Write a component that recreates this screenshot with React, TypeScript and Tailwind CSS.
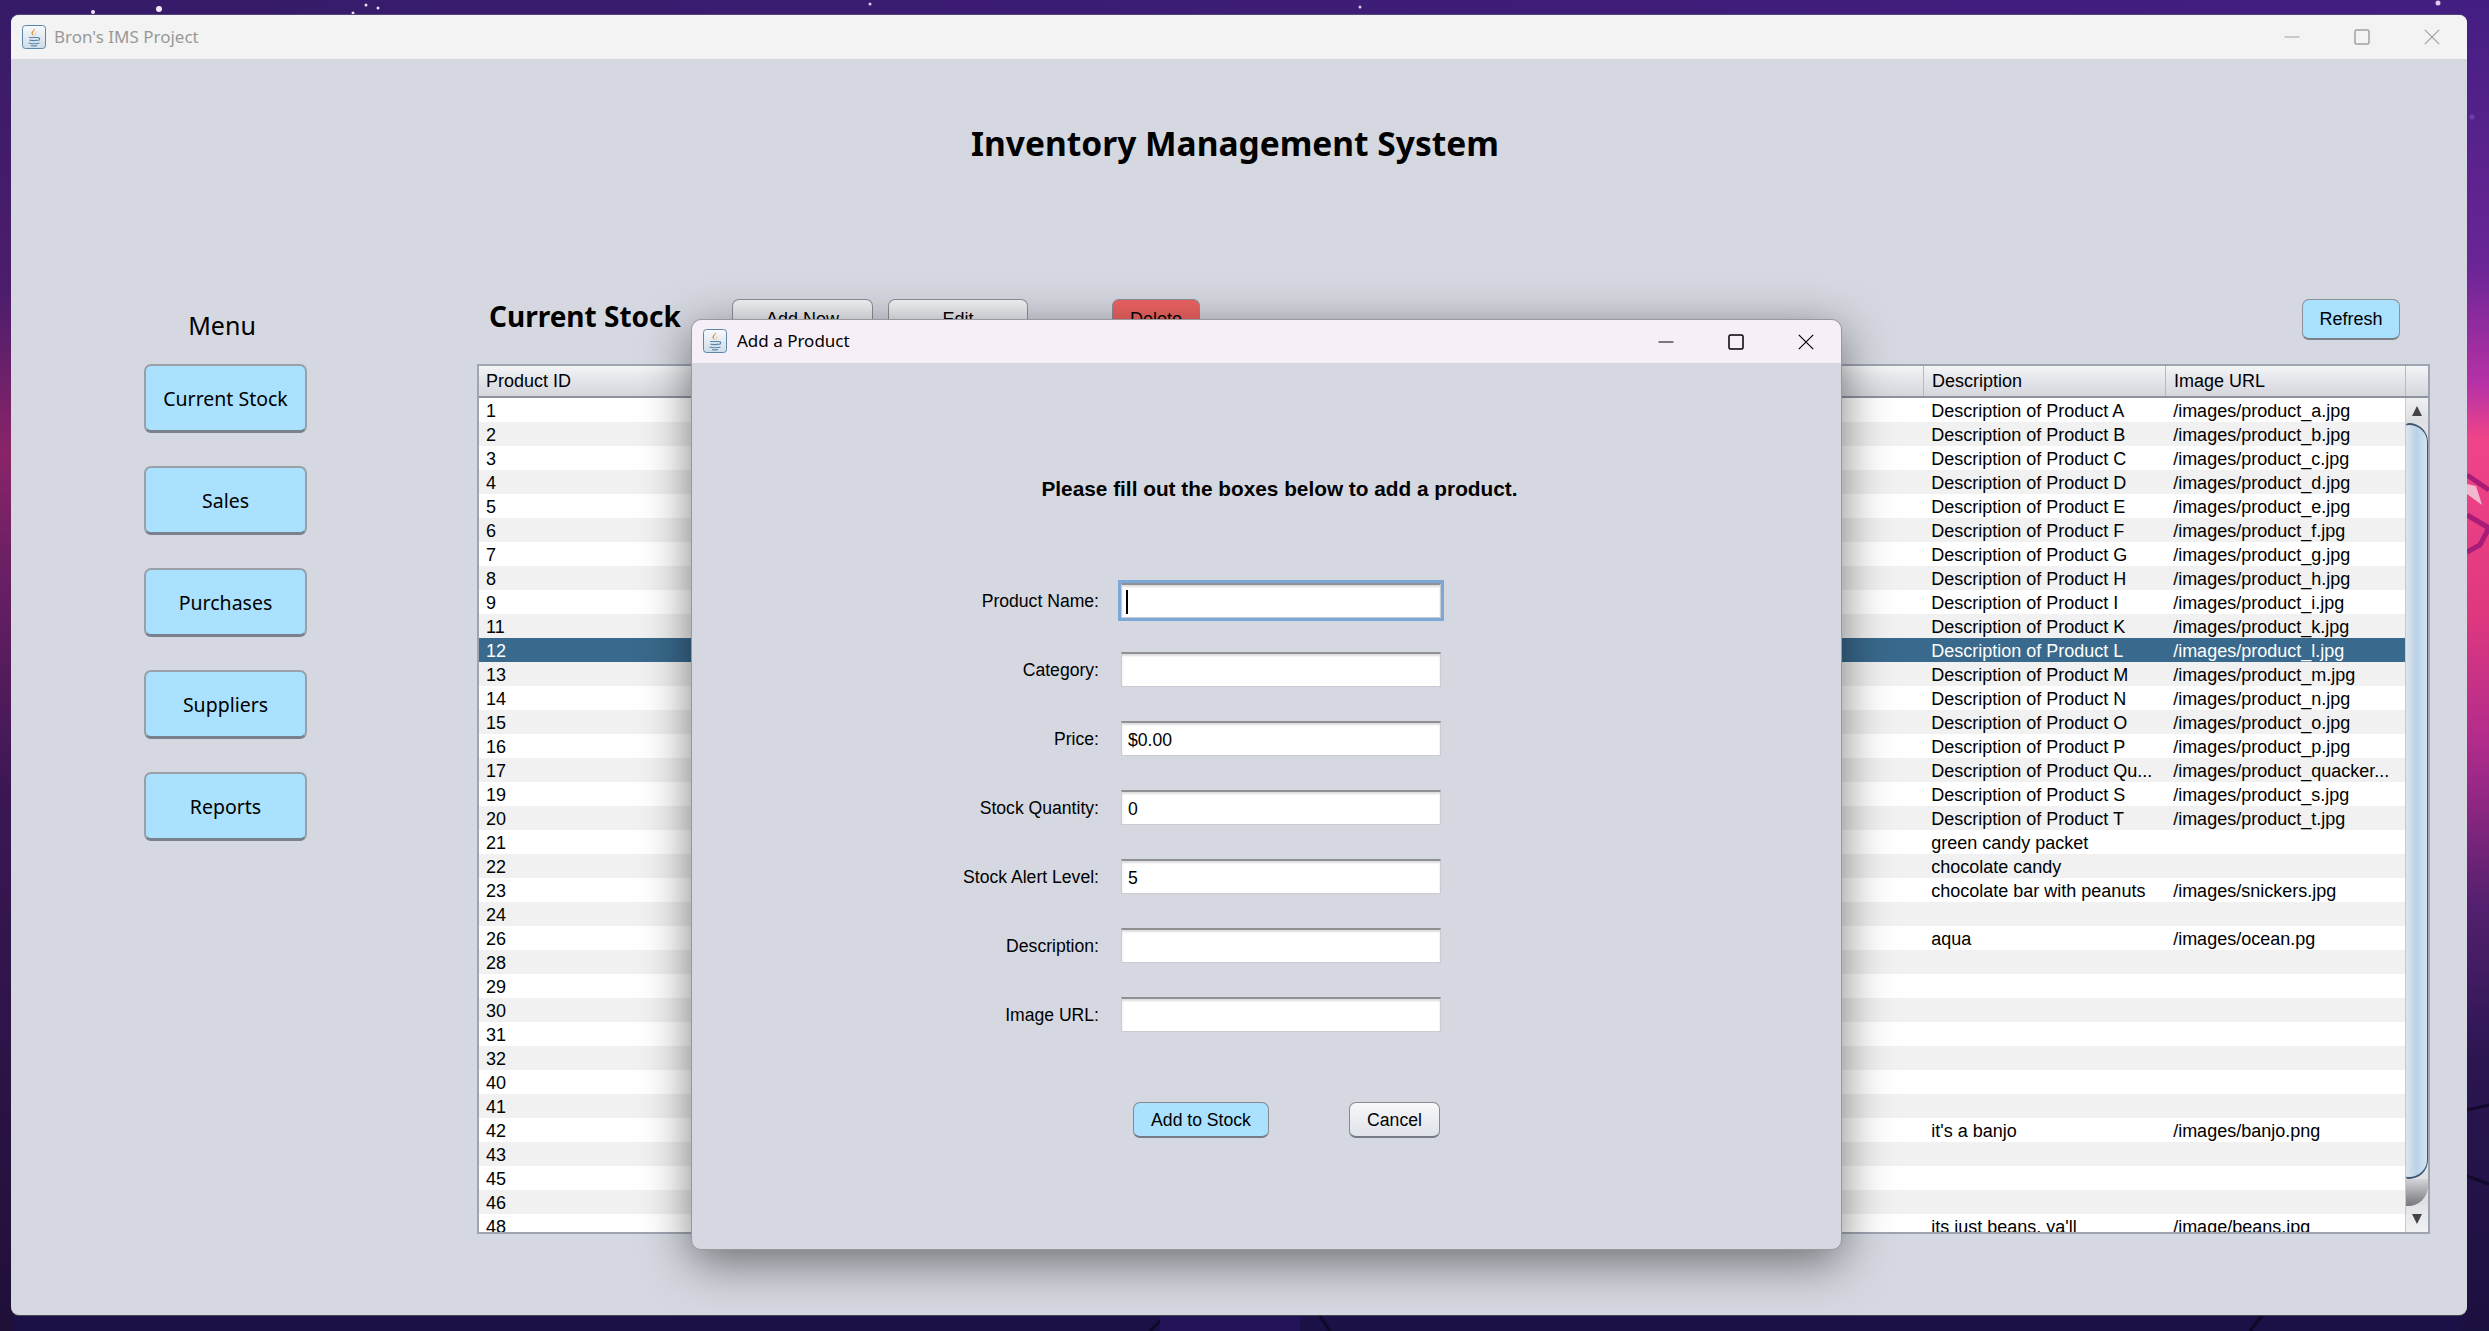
import React from "react";

const sans = "font-['Liberation_Sans',Arial,sans-serif]";
const ui = "font-['Noto_Sans',Tahoma,sans-serif]";

type Row = { id: number; desc?: string; url?: string };

const rows: Row[] = [
  { id: 1, desc: "Description of Product A", url: "/images/product_a.jpg" },
  { id: 2, desc: "Description of Product B", url: "/images/product_b.jpg" },
  { id: 3, desc: "Description of Product C", url: "/images/product_c.jpg" },
  { id: 4, desc: "Description of Product D", url: "/images/product_d.jpg" },
  { id: 5, desc: "Description of Product E", url: "/images/product_e.jpg" },
  { id: 6, desc: "Description of Product F", url: "/images/product_f.jpg" },
  { id: 7, desc: "Description of Product G", url: "/images/product_g.jpg" },
  { id: 8, desc: "Description of Product H", url: "/images/product_h.jpg" },
  { id: 9, desc: "Description of Product I", url: "/images/product_i.jpg" },
  { id: 11, desc: "Description of Product K", url: "/images/product_k.jpg" },
  { id: 12, desc: "Description of Product L", url: "/images/product_l.jpg" },
  { id: 13, desc: "Description of Product M", url: "/images/product_m.jpg" },
  { id: 14, desc: "Description of Product N", url: "/images/product_n.jpg" },
  { id: 15, desc: "Description of Product O", url: "/images/product_o.jpg" },
  { id: 16, desc: "Description of Product P", url: "/images/product_p.jpg" },
  { id: 17, desc: "Description of Product Qu...", url: "/images/product_quacker..." },
  { id: 19, desc: "Description of Product S", url: "/images/product_s.jpg" },
  { id: 20, desc: "Description of Product T", url: "/images/product_t.jpg" },
  { id: 21, desc: "green candy packet" },
  { id: 22, desc: "chocolate candy" },
  { id: 23, desc: "chocolate bar with peanuts", url: "/images/snickers.jpg" },
  { id: 24 },
  { id: 26, desc: "aqua", url: "/images/ocean.pg" },
  { id: 28 },
  { id: 29 },
  { id: 30 },
  { id: 31 },
  { id: 32 },
  { id: 40 },
  { id: 41 },
  { id: 42, desc: "it's a banjo", url: "/images/banjo.png" },
  { id: 43 },
  { id: 45 },
  { id: 46 },
  { id: 48, desc: "its just beans, ya'll", url: "/image/beans.jpg" },
];

const fields = [
  { label: "Product Name:", value: "", focused: true },
  { label: "Category:", value: "" },
  { label: "Price:", value: "$0.00" },
  { label: "Stock Quantity:", value: "0" },
  { label: "Stock Alert Level:", value: "5" },
  { label: "Description:", value: "" },
  { label: "Image URL:", value: "" },
];

const Wallpaper = () => (
  <svg className="absolute inset-0" width="2489" height="1331" viewBox="0 0 2489 1331">
    <defs>
      <linearGradient id="wpTop" x1="0" y1="0" x2="1" y2="0">
        <stop offset="0" stopColor="#361b68" />
        <stop offset="1" stopColor="#431e82" />
      </linearGradient>
      <linearGradient id="wpRight" x1="0" y1="0" x2="0" y2="1">
        <stop offset="0" stopColor="#431e82" />
        <stop offset="0.2" stopColor="#6a2596" />
        <stop offset="0.29" stopColor="#b832a6" />
        <stop offset="0.33" stopColor="#f04488" />
        <stop offset="0.46" stopColor="#e0387f" />
        <stop offset="0.56" stopColor="#b02b8c" />
        <stop offset="0.68" stopColor="#53206f" />
        <stop offset="0.8" stopColor="#2a1550" />
        <stop offset="1" stopColor="#1c1040" />
      </linearGradient>
      <linearGradient id="wpLeft" x1="0" y1="0" x2="0" y2="1">
        <stop offset="0" stopColor="#361b68" />
        <stop offset="0.22" stopColor="#4c1d6c" />
        <stop offset="0.34" stopColor="#8a2468" />
        <stop offset="0.42" stopColor="#6c2064" />
        <stop offset="0.6" stopColor="#3a1754" />
        <stop offset="1" stopColor="#1f1038" />
      </linearGradient>
    </defs>
    <rect width="2489" height="1331" fill="#1c1146" />
    <rect width="2489" height="20" fill="url(#wpTop)" />
    <rect x="0" width="14" height="1331" fill="url(#wpLeft)" />
    <rect x="2460" width="29" height="1331" fill="url(#wpRight)" />
    <path d="M2467 475 L2489 490 M2467 515 L2489 528 L2480 545 L2467 552" stroke="#a81c78" strokeWidth="5" fill="none" />
    <path d="M2467 484 L2476 486 L2482 505 L2467 494 Z" fill="#f3b7d0" />
    <path d="M2467 1110 L2489 1105 M2467 1176 L2489 1184" stroke="#120a2c" strokeWidth="3" fill="none" />
    <path d="M1150 1331 L1165 1316 M1330 1331 L1320 1316 M2250 1331 L2262 1316" stroke="#0d0a26" strokeWidth="3" />
    <rect x="1160" y="1316" width="140" height="15" fill="#241259" />
    <circle cx="93" cy="12" r="2" fill="#efe8f7" />
    <circle cx="159" cy="9" r="3" fill="#f2ecf9" />
    <circle cx="353" cy="13" r="1.5" fill="#e8e0f2" />
    <circle cx="366" cy="5" r="1.5" fill="#e8e0f2" />
    <circle cx="378" cy="8" r="1.5" fill="#e8e0f2" />
    <circle cx="2438" cy="3" r="2.5" fill="#d9cdea" />
    <circle cx="2472" cy="117" r="2.5" fill="#6d3fa8" />
    <circle cx="870" cy="4" r="1.5" fill="#d9cdea" />
    <circle cx="1360" cy="7" r="1.5" fill="#d9cdea" />
  </svg>
);

const JavaIcon = () => (
  <svg width="24" height="24" viewBox="0 0 24 24" className="shrink-0">
    <defs>
      <linearGradient id="jBox" x1="0" y1="0" x2="0" y2="1">
        <stop offset="0" stopColor="#f7fafd" />
        <stop offset="1" stopColor="#cfdce8" />
      </linearGradient>
    </defs>
    <rect x="0.5" y="0.5" width="23" height="23" rx="3" fill="url(#jBox)" stroke="#5f86a6" />
    <path d="M12.5 3 C14 5.5 10 6.5 11 9 C11.5 10.5 12.5 11 12.5 11 C11 10.5 9 9.5 9.5 7.5 C10 6 12.5 5 12.5 3 Z" fill="#e8872a" />
    <path d="M15 6 C13.5 7.5 13 9 14 11 C12.8 10 12.6 8 15 6 Z" fill="#e8872a" />
    <path d="M7 12.5 H16 M16 13 C18 12.5 18.5 15 15.5 15.5 M7.5 15 C8.5 15.8 14.5 15.8 15.5 15 M6.5 18 C9 19 15 19 17.5 18 M9 20.5 C10.5 21 13.5 21 15 20.5" stroke="#5a86ab" strokeWidth="1.2" fill="none" />
  </svg>
);

const WinControls = ({ color }: { color: string }) => (
  <div className="flex h-full items-center">
    <div className="flex h-full w-[70px] items-center justify-center">
      <svg width="16" height="16" viewBox="0 0 16 16" fill="none" stroke={color} strokeWidth="1">
        <path d="M0.5 8 H15.5" />
      </svg>
    </div>
    <div className="flex h-full w-[70px] items-center justify-center">
      <svg width="16" height="16" viewBox="0 0 16 16" fill="none" stroke={color} strokeWidth="1.5">
        <rect x="1" y="1" width="14" height="14" rx="1.5" />
      </svg>
    </div>
    <div className="flex h-full w-[70px] items-center justify-center">
      <svg width="16" height="16" viewBox="0 0 16 16" fill="none" stroke={color} strokeWidth="1.2">
        <path d="M0.8 0.8 L15.2 15.2 M15.2 0.8 L0.8 15.2" />
      </svg>
    </div>
  </div>
);

const MenuButton = ({ label }: { label: string }) => (
  <div className={`flex h-[69px] w-[163px] items-center justify-center rounded-[7px] border-2 border-[#9aa0a8] border-b-[3px] border-b-[#79828c] bg-[#a9e1ff] pt-[2px] text-[19.5px] text-black ${ui}`}>
    {label}
  </div>
);

const ToolButton = ({ label, className }: { label: string; className: string }) => (
  <div className={`flex h-[41px] items-center justify-center rounded-[7px] border border-[#8d9096] border-b-2 border-b-[#7b8088] text-[18px] text-black ${sans} ${className}`}>
    {label}
  </div>
);

const Scrollbar = () => (
  <div className="flex h-full w-[23px] shrink-0 flex-col border-l border-[#c4c8cf] bg-[#dfe1e5]">
    <div className="flex h-[25px] shrink-0 items-center justify-center bg-gradient-to-b from-[#eef0f2] to-[#dcdee2]">
      <svg width="12" height="12" viewBox="0 0 12 12">
        <path d="M6 1 L11 11 H1 Z" fill="#444" />
      </svg>
    </div>
    <div className="min-h-0 flex-1 rounded-tr-[20px] rounded-br-[20px] rounded-tl-[3px] rounded-bl-[3px] border-t-2 border-r border-b-2 border-[#3d566e] bg-gradient-to-r from-[#dfe5ec] via-[#b9d2e8] to-[#d4e4f2]" />
    <div className="h-[27px] shrink-0 rounded-br-[20px] bg-gradient-to-b from-[#d4d5d8] to-[#76787c]" />
    <div className="flex h-[26px] shrink-0 items-center justify-center bg-gradient-to-b from-[#e2e4e8] to-[#f0f1f3]">
      <svg width="12" height="12" viewBox="0 0 12 12">
        <path d="M6 11 L11 1 H1 Z" fill="#444" />
      </svg>
    </div>
  </div>
);

const HeaderCell = ({ label, className }: { label: string; className: string }) => (
  <div className={`flex h-full items-center border-r border-[#b6bac3] ${className}`}>{label}</div>
);

const StockTable = () => (
  <div className={`mt-[24px] flex h-[870px] w-[1953px] flex-col overflow-hidden border-2 border-[#9ea5b1] bg-white text-[18px] text-black ${sans}`}>
    <div className="flex h-[32px] shrink-0 border-b-2 border-[#8e949f] bg-gradient-to-b from-[#f4f5f7] via-[#e3e4e9] to-[#d5d7dd]">
      <HeaderCell label="Product ID" className="w-[1445px] pl-[7px]" />
      <HeaderCell label="Description" className="w-[242px] pl-[8px]" />
      <HeaderCell label="Image URL" className="w-[240px] pl-[8px]" />
    </div>
    <div className="flex min-h-0 flex-1">
      <div className="min-w-0 flex-1 overflow-hidden">
        {rows.map((r, i) => (
          <div
            key={r.id}
            className={`flex h-[24px] items-center pt-[2px] ${r.id === 12 ? "bg-[#39698c] text-white" : i % 2 === 0 ? "bg-white" : "bg-[#f1f1f1]"}`}
          >
            <div className="w-[1445px] pl-[7px]">{r.id}</div>
            <div className="w-[242px] pl-[8px] whitespace-nowrap">{r.desc}</div>
            <div className="w-[240px] pl-[8px] whitespace-nowrap">{r.url}</div>
          </div>
        ))}
      </div>
      <Scrollbar />
    </div>
  </div>
);

const FormRow = ({ label, value, focused }: { label: string; value: string; focused?: boolean }) => (
  <div className="flex h-[35px] items-center">
    <label className={`w-[408px] pt-[2px] pr-[1px] text-right text-[17.6px] text-black ${sans}`}>{label}</label>
    <div className={`relative ml-[21px] h-[35px] w-[320px] ${focused ? "outline-[3px] outline-[#7ba8d6]" : ""}`}>
      <input
        readOnly
        value={value}
        className={`h-full w-full border border-t-2 border-[#c9cbd0] border-t-[#8f9094] bg-white pt-[2px] pl-[6px] text-[17.6px] text-black shadow-[inset_0_2px_2px_#dedede] outline-none ${sans}`}
      />
      {focused && <div className="absolute top-[7px] left-[5px] h-[24px] w-[2px] bg-black" />}
    </div>
  </div>
);

const AddDialog = () => (
  <div className="absolute top-[304px] left-[680px] flex h-[931px] w-[1151px] flex-col overflow-visible rounded-[10px] border border-[#97999f] bg-[#d5d8e0] shadow-[0_12px_48px_rgba(0,0,0,0.5)]">
    <div className={`flex h-[43px] shrink-0 items-center justify-between rounded-t-[10px] bg-[#f7eff8] pl-[11px] ${ui}`}>
      <div className="flex items-center gap-[10px] pb-[2px] text-[17px] text-black">
        <JavaIcon />
        <span>Add a Product</span>
      </div>
      <WinControls color="#000" />
    </div>
    <div className={`pt-[114px] pl-[26px] text-center text-[20.8px] leading-[24px] font-bold text-black ${sans}`}>
      Please fill out the boxes below to add a product.
    </div>
    <div className="mt-[82px] flex flex-col gap-[34px]">
      {fields.map((f) => (
        <FormRow key={f.label} label={f.label} value={f.value} focused={f.focused} />
      ))}
    </div>
    <div className="mt-[70px] flex pl-[441px]">
      <div className={`flex h-[36px] w-[136px] items-center justify-center rounded-[7px] border border-[#858a91] border-b-2 border-b-[#767c84] bg-[#a9e1ff] pt-[2px] text-[17.6px] text-black ${sans}`}>
        Add to Stock
      </div>
      <div className={`ml-[80px] flex h-[36px] w-[91px] items-center justify-center rounded-[7px] border border-[#858a91] border-b-2 border-b-[#767c84] bg-gradient-to-b from-[#f8f8fa] to-[#dfe2ea] pt-[2px] text-[17.6px] text-black ${sans}`}>
        Cancel
      </div>
    </div>
  </div>
);

export default function App() {
  return (
    <div className="relative h-[1331px] w-[2489px] overflow-hidden bg-[#1c1146]">
      <Wallpaper />
      <div className="absolute top-[15px] left-[11px] flex h-[1300px] w-[2456px] flex-col overflow-hidden rounded-[8px] bg-[#d5d8e0] shadow-[0_-1px_0_#54447a,0_1px_0_#44444f]">
        <div className={`flex h-[44px] shrink-0 items-center justify-between bg-[#f3f3f3] pl-[11px] ${ui}`}>
          <div className="flex items-center gap-[8px] text-[17px] text-[#999]">
            <JavaIcon />
            <span>Bron's IMS Project</span>
          </div>
          <WinControls color="#a0a0a0" />
        </div>
        <div className="flex-1">
          <h1 className={`h-[240px] pt-[62px] pr-[8px] text-center text-[33.5px] leading-[44px] font-bold text-black ${ui}`}>
            Inventory Management System
          </h1>
          <div className="flex">
            <div className="w-[466px] shrink-0 pl-[133px]">
              <div className={`flex h-[65px] w-[163px] justify-center pt-[8px] pr-[7px] text-[25px] leading-[36px] text-black ${ui}`}>Menu</div>
              <div className="flex flex-col gap-[33px]">
                {["Current Stock", "Sales", "Purchases", "Suppliers", "Reports"].map((m) => (
                  <MenuButton key={m} label={m} />
                ))}
              </div>
            </div>
            <div>
              <div className="flex h-[41px] items-center">
                <div className={`w-[255px] pb-[8px] pl-[12px] text-[28px] leading-[36px] font-bold whitespace-nowrap text-black ${ui}`}>Current Stock</div>
                <ToolButton label="Add New" className="w-[141px] bg-gradient-to-b from-[#f4f5f7] to-[#dfe1e8]" />
                <ToolButton label="Edit" className="ml-[15px] w-[140px] bg-gradient-to-b from-[#f4f5f7] to-[#dfe1e8]" />
                <ToolButton label="Delete" className="ml-[84px] w-[88px] bg-[#ef6363]" />
                <ToolButton label="Refresh" className="ml-auto mr-[30px] w-[98px] bg-[#a9e1ff]" />
              </div>
              <StockTable />
            </div>
          </div>
        </div>
        <AddDialog />
      </div>
    </div>
  );
}
